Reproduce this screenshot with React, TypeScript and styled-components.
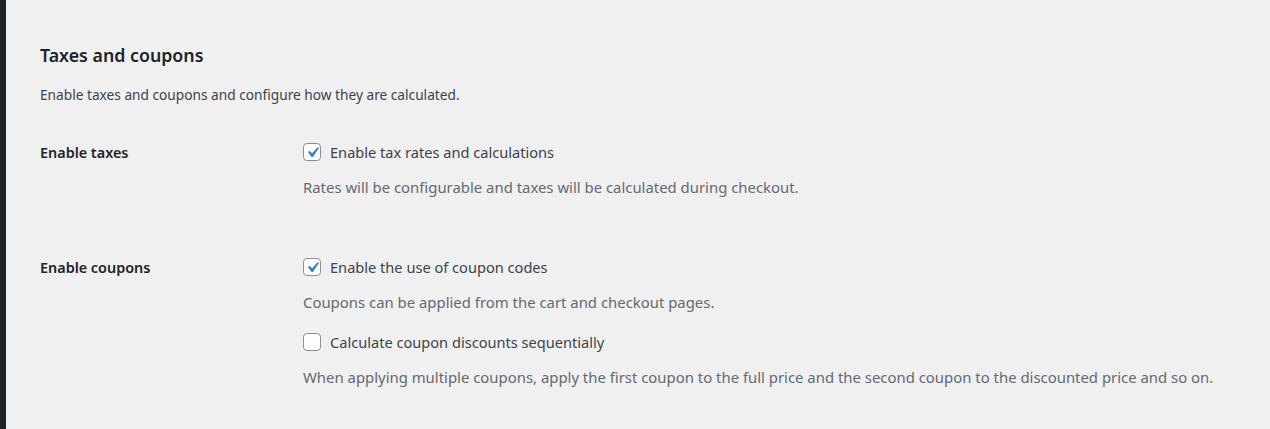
import { createGlobalStyle, styled } from 'styled-components';

const GlobalStyle = createGlobalStyle`
  html, body {
    margin: 0;
    padding: 0;
    background: #f0f0f1;
  }
  body {
    font-family: "Noto Sans", "Open Sans", sans-serif;
    font-size: 14px;
    color: #3c434a;
  }
`;

const Page = styled.div`
  display: flex;
  min-height: 429px;
`;

const AdminBar = styled.div`
  flex: none;
  width: 6px;
  background: #1d2327;
`;

const Content = styled.div`
  flex: 1;
  padding: 43px 0 0 34px;
`;

const Heading = styled.h2`
  margin: 0;
  font-size: 17.8px;
  line-height: 24px;
  font-weight: 600;
  color: #1d2327;
`;

const Intro = styled.p`
  margin: 18px 0 0;
  font-size: 13.7px;
  line-height: 20px;
  color: #3c434a;
`;

const FormTable = styled.div`
  display: grid;
  grid-template-columns: 263px 1fr;
  row-gap: 60px;
  margin-top: 37px;
`;

const FieldLabel = styled.div`
  font-weight: 600;
  font-size: 14.4px;
  line-height: 20px;
  padding-top: 1px;
  color: #1d2327;
`;

const FieldBody = styled.div`
  display: flex;
  flex-direction: column;
`;

const CheckRow = styled.label<{ $gap?: number }>`
  display: flex;
  align-items: center;
  gap: 9px;
  font-size: 14.6px;
  line-height: 20px;
  margin-top: ${({ $gap = 0 }) => $gap}px;
  color: #3c434a;
`;

const Box = styled.span`
  flex: none;
  box-sizing: border-box;
  width: 18px;
  height: 18px;
  border: 1px solid #8c8f94;
  border-radius: 4px;
  background: #fff;
  display: flex;
  align-items: center;
  justify-content: center;
  overflow: visible;
`;

const Description = styled.p`
  margin: 15px 0 0;
  font-size: 14.9px;
  line-height: 20px;
  color: #646970;
`;

const Check = ({ checked }: { checked: boolean }) => (
  <Box>
    {checked && (
      <svg width="21" height="21" viewBox="0 0 20 20" aria-hidden="true" style={{ flex: 'none' }}>
        <path
          d="M14.83 4.89l1.34.94-5.81 8.38H9.02L5.78 9.67l1.34-1.25 2.57 2.4z"
          fill="#3582c4"
        />
      </svg>
    )}
  </Box>
);

const App = () => (
  <>
    <GlobalStyle />
    <Page>
      <AdminBar />
      <Content>
        <Heading>Taxes and coupons</Heading>
        <Intro>Enable taxes and coupons and configure how they are calculated.</Intro>
        <FormTable>
          <FieldLabel>Enable taxes</FieldLabel>
          <FieldBody>
            <CheckRow>
              <Check checked />
              Enable tax rates and calculations
            </CheckRow>
            <Description>
              Rates will be configurable and taxes will be calculated during checkout.
            </Description>
          </FieldBody>

          <FieldLabel>Enable coupons</FieldLabel>
          <FieldBody>
            <CheckRow>
              <Check checked />
              Enable the use of coupon codes
            </CheckRow>
            <Description>Coupons can be applied from the cart and checkout pages.</Description>
            <CheckRow $gap={20}>
              <Check checked={false} />
              Calculate coupon discounts sequentially
            </CheckRow>
            <Description>
              When applying multiple coupons, apply the first coupon to the full price and the
              second coupon to the discounted price and so on.
            </Description>
          </FieldBody>
        </FormTable>
      </Content>
    </Page>
  </>
);

export default App;
